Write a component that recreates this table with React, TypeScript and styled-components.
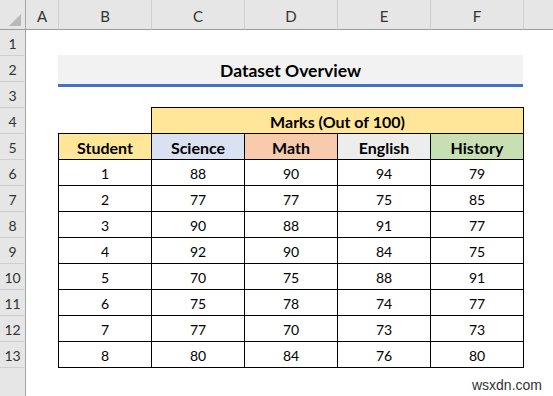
import React from 'react'
import styled, { createGlobalStyle } from 'styled-components'

const subjects = [
  { name: 'Science', bg: '#d9e1f2' },
  { name: 'Math', bg: '#f8cbad' },
  { name: 'English', bg: '#ededed' },
  { name: 'History', bg: '#c6e0b4' },
]

const marks = [
  [88, 90, 94, 79],
  [77, 77, 75, 85],
  [90, 88, 91, 77],
  [92, 90, 84, 75],
  [70, 75, 88, 91],
  [75, 78, 74, 77],
  [77, 70, 73, 73],
  [80, 84, 76, 80],
]

const letters = ['A', 'B', 'C', 'D', 'E', 'F', '']

function App() {
  return (
    <>
      <GlobalStyle />
      <Sheet>
        <Corner>
          <svg width="14" height="14" viewBox="0 0 14 14">
            <polygon points="13,1 13,13 1,13" fill="#b9b9b9" />
          </svg>
        </Corner>
        {letters.map((l, i) => (
          <ColHead key={i} $col={i + 2}>{l}</ColHead>
        ))}
        {Array.from({ length: 13 }, (_, i) => (
          <RowHead key={i} $row={i + 2} $first={i === 0}>{i + 1}</RowHead>
        ))}
        <RowHead $row={15} />

        <Title>Dataset Overview</Title>

        <Cell $col="4 / 8" $row={5} $bg="#ffe699" $bold $right>Marks (Out of 100)</Cell>
        <Cell $col={3} $row={6} $bg="#ffe699" $bold>Student</Cell>
        {subjects.map((s, i) => (
          <Cell key={s.name} $col={i + 4} $row={6} $bg={s.bg} $bold $right={i === 3}>
            {s.name}
          </Cell>
        ))}

        {marks.map((row, r) => (
          <React.Fragment key={r}>
            <Cell $col={3} $row={r + 7} $bottom={r === 7}>{r + 1}</Cell>
            {row.map((m, c) => (
              <Cell key={c} $col={c + 4} $row={r + 7} $right={c === 3} $bottom={r === 7}>
                {m}
              </Cell>
            ))}
          </React.Fragment>
        ))}

        <Watermark>wsxdn.com</Watermark>
      </Sheet>
    </>
  )
}

export default App

const GlobalStyle = createGlobalStyle`
  body {
    margin: 0;
    background: #ffffff;
    font-family: Lato, "Open Sans", sans-serif;
  }
`

const Sheet = styled.div`
  width: 553px;
  height: 396px;
  display: grid;
  grid-template-columns: 26px 32px repeat(5, 93px) 1fr;
  grid-template-rows: 30px 25px repeat(12, 26px) 1fr;
  background: #ffffff;
  overflow: hidden;
`

const Corner = styled.div`
  grid-column: 1;
  grid-row: 1;
  background: #e6e6e6;
  border-right: 1px solid #a6a6a6;
  border-bottom: 1px solid #9b9b9b;
  display: flex;
  align-items: flex-end;
  justify-content: flex-end;
  padding: 0 3px 2px 0;
`

const ColHead = styled.div<{ $col: number }>`
  grid-column: ${p => p.$col};
  grid-row: 1;
  background: #e6e6e6;
  border-bottom: 1px solid #9b9b9b;
  border-left: ${p => (p.$col > 2 ? '1px solid #cfcfcf' : 'none')};
  display: flex;
  align-items: flex-end;
  justify-content: center;
  padding-bottom: 4px;
  font-size: 15px;
  color: #333333;
`

const RowHead = styled.div<{ $row: number; $first?: boolean }>`
  grid-column: 1;
  grid-row: ${p => p.$row};
  background: #e6e6e6;
  border-right: 1px solid #a6a6a6;
  border-top: ${p => (p.$first ? 'none' : '1px solid #cfcfcf')};
  display: flex;
  align-items: flex-end;
  justify-content: center;
  padding-bottom: 3px;
  font-size: 14px;
  color: #333333;
`

const Title = styled.div`
  grid-column: 3 / 8;
  grid-row: 3;
  align-self: start;
  height: 28px;
  background: #f2f2f2;
  border-bottom: 3px solid #4472c4;
  display: flex;
  align-items: center;
  justify-content: center;
  padding-top: 1px;
  font-size: 17.5px;
  font-weight: 700;
  color: #000000;
`

const Cell = styled.div<{
  $col: number | string
  $row: number
  $bg?: string
  $bold?: boolean
  $right?: boolean
  $bottom?: boolean
}>`
  grid-column: ${p => p.$col};
  grid-row: ${p => p.$row};
  background: ${p => p.$bg || '#ffffff'};
  border-left: 1px solid #000000;
  border-top: 1px solid #000000;
  box-shadow: ${p =>
    [p.$right && '1px 0 0 #000000', p.$bottom && '0 1px 0 #000000', p.$right && p.$bottom && '1px 1px 0 #000000']
      .filter(Boolean)
      .join(', ') || 'none'};
  display: flex;
  align-items: center;
  justify-content: center;
  padding-top: 2px;
  font-size: ${p => (p.$bold ? '16px' : '14px')};
  font-weight: ${p => (p.$bold ? 700 : 400)};
  color: #000000;
`

const Watermark = styled.div`
  grid-column: 6 / 9;
  grid-row: 15;
  justify-self: end;
  align-self: end;
  padding: 0 11px 3px 0;
  font-family: "Liberation Sans", Arial, sans-serif;
  font-size: 14px;
  color: #333333;
`
